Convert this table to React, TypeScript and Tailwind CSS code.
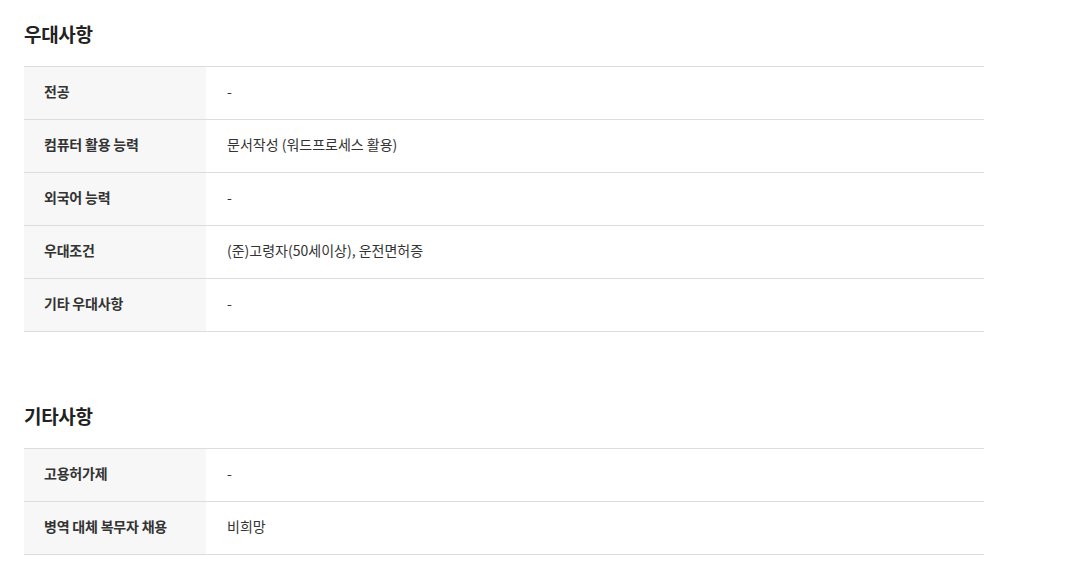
export default function App() {
  const sections = [
    {
      title: "우대사항",
      rows: [
        { label: "전공", value: "-" },
        { label: "컴퓨터 활용 능력", value: "문서작성 (워드프로세스 활용)" },
        { label: "외국어 능력", value: "-" },
        { label: "우대조건", value: "(준)고령자(50세이상), 운전면허증" },
        { label: "기타 우대사항", value: "-" },
      ],
    },
    {
      title: "기타사항",
      rows: [
        { label: "고용허가제", value: "-" },
        { label: "병역 대체 복무자 채용", value: "비희망" },
      ],
    },
  ]

  return (
    <div className="min-h-screen bg-white px-6 pt-5 font-['Noto_Sans_CJK_KR','Noto_Sans',sans-serif]">
      {sections.map((section, i) => (
        <section key={i} className={i > 0 ? "mt-[70px] w-[960px]" : "w-[960px]"}>
          <h2 className="mb-[18px] text-[19px] font-bold leading-[28px] tracking-[-0.3px] text-[#222]">
            {section.title}
          </h2>
          <div className="border-t border-[#dddddd]">
            {section.rows.map((row, j) => (
              <div key={j} className="flex h-[53px] border-b border-[#dddddd] text-[14px]">
                <div className="flex w-[182px] shrink-0 items-center bg-[#f7f7f7] pb-[3px] pl-5 font-bold tracking-[-0.2px] text-[#333]">
                  {row.label}
                </div>
                <div className="flex flex-1 items-center pb-[3px] pl-[21px] text-[#333]">{row.value}</div>
              </div>
            ))}
          </div>
        </section>
      ))}
    </div>
  )
}
